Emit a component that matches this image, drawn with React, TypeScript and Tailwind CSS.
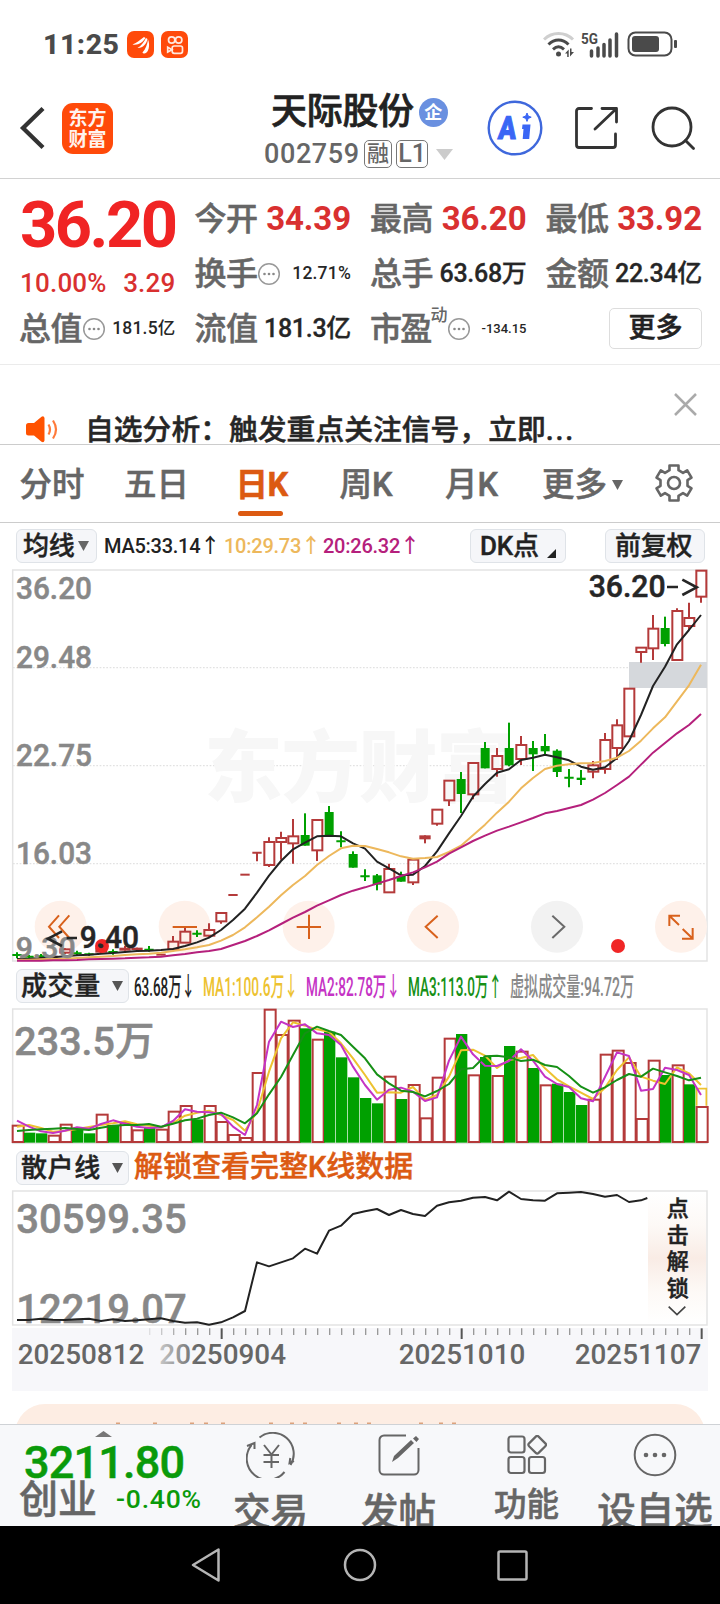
import React from 'react';

// [kind, top, bottom, high, low] - kind: r = rising (hollow), g = falling (filled), f = rising and filled,
// x = green doji, d = red dash. Y values are in chart units.
type Candle = [string, number, number, number, number];

const candles: Candle[] = [
  ['x', 1185, 1185, 1177, 1195],
  ['x', 1190, 1190, 1185, 1196],
  ['x', 1189, 1189, 1182, 1196],
  ['d', 1190, 1190, 1190, 1190],
  ['r', 1168, 1178, 1165, 1182],
  ['x', 1180, 1180, 1172, 1188],
  ['x', 1183, 1183, 1178, 1188],
  ['r', 1165, 1175, 1150, 1180],
  ['x', 1176, 1176, 1168, 1184],
  ['f', 1163, 1172, 1158, 1172],
  ['f', 1163, 1170, 1163, 1172],
  ['x', 1169, 1169, 1158, 1175],
  ['d', 1184, 1184, 1184, 1184],
  ['r', 1145, 1168, 1128, 1168],
  ['r', 1115, 1148, 1103, 1148],
  ['x', 1121, 1121, 1111, 1131],
  ['r', 1110, 1127, 1090, 1131],
  ['r', 1059, 1084, 1059, 1091],
  ['d', 1005, 1005, 1005, 1005],
  ['d', 944, 944, 944, 944],
  ['d', 878, 878, 878, 904],
  ['r', 846, 915, 832, 921],
  ['r', 834, 846, 815, 899],
  ['r', 829, 850, 777, 911],
  ['g', 825, 857, 760, 857],
  ['r', 780, 871, 780, 903],
  ['g', 756, 831, 738, 831],
  ['x', 844, 844, 814, 862],
  ['g', 882, 923, 874, 923],
  ['x', 949, 949, 928, 963],
  ['g', 946, 974, 942, 991],
  ['r', 927, 997, 911, 997],
  ['g', 948, 965, 935, 965],
  ['r', 899, 967, 899, 975],
  ['f', 826, 838, 826, 850],
  ['r', 749, 791, 749, 797],
  ['r', 662, 721, 662, 738],
  ['g', 657, 702, 636, 759],
  ['r', 609, 703, 609, 718],
  ['g', 564, 625, 546, 625],
  ['r', 588, 627, 564, 650],
  ['g', 564, 616, 488, 619],
  ['r', 555, 597, 528, 615],
  ['g', 564, 583, 543, 633],
  ['g', 558, 574, 522, 586],
  ['g', 572, 636, 568, 651],
  ['x', 653, 653, 627, 682],
  ['g', 653, 660, 630, 675],
  ['r', 616, 635, 603, 655],
  ['r', 540, 627, 519, 641],
  ['r', 496, 564, 478, 600],
  ['r', 386, 529, 386, 529],
  ['r', 263, 276, 263, 308],
  ['r', 206, 265, 165, 300],
  ['g', 204, 252, 170, 259],
  ['r', 153, 300, 145, 300],
  ['r', 174, 198, 128, 210],
  ['r', 32, 110, 32, 128],
];

const ma5 = [1197, 1196, 1194, 1192, 1189, 1186, 1184, 1181, 1179, 1176, 1173, 1172, 1170, 1167, 1158, 1147, 1133, 1110, 1080, 1046, 998, 947, 903, 868, 848, 829, 827, 829, 850, 866, 905, 925, 946, 944, 918, 874, 820, 768, 710, 672, 638, 628, 600, 593, 584, 592, 601, 620, 629, 622, 594, 543, 465, 378, 320, 253, 210, 165];
const ma10 = [1200, 1199, 1198, 1197, 1196, 1194, 1192, 1190, 1188, 1185, 1183, 1181, 1178, 1173, 1168, 1162, 1155, 1142, 1125, 1102, 1072, 1040, 1006, 975, 948, 915, 888, 865, 857, 858, 867, 877, 889, 896, 894, 891, 876, 857, 826, 794, 758, 725, 685, 654, 627, 617, 613, 610, 609, 603, 593, 573, 542, 505, 472, 424, 376, 314];
const ma20 = [1202, 1202, 1202, 1201, 1201, 1200, 1198, 1197, 1196, 1195, 1193, 1192, 1190, 1186, 1182, 1177, 1173, 1167, 1155, 1143, 1128, 1111, 1092, 1073, 1056, 1037, 1021, 1005, 992, 982, 971, 960, 948, 937, 922, 905, 881, 862, 843, 827, 812, 800, 787, 774, 760, 753, 744, 735, 719, 699, 675, 650, 614, 578, 549, 520, 495, 462];

const volumes: [string, number][] = [
  ['r', 480], ['g', 503], ['g', 505], ['r', 510], ['r', 477], ['g', 493], ['g', 505], ['r', 447], ['g', 480], ['r', 472],
  ['r', 494], ['g', 487], ['r', 492], ['r', 438], ['r', 421], ['g', 463], ['r', 421], ['r', 469], ['r', 508], ['r', 517],
  ['r', 322], ['r', 132], ['r', 208], ['r', 165], ['g', 190], ['r', 222], ['g', 200], ['g', 277], ['g', 337], ['g', 399],
  ['g', 415], ['r', 333], ['g', 402], ['r', 358], ['r', 458], ['r', 336], ['r', 219], ['g', 207], ['r', 329], ['g', 276],
  ['r', 331], ['g', 243], ['r', 258], ['g', 309], ['r', 359], ['g', 356], ['g', 381], ['g', 420], ['r', 402], ['r', 267],
  ['r', 255], ['r', 292], ['r', 460], ['r', 285], ['g', 330], ['r', 299], ['g', 358], ['r', 424],
];

const volYellow = [485, 480, 489, 500, 497, 492, 486, 480, 475, 469, 478, 482, 487, 474, 452, 443, 437, 450, 465, 497, 440, 320, 220, 172, 182, 193, 200, 235, 280, 330, 383, 382, 383, 366, 404, 390, 335, 256, 254, 272, 309, 285, 279, 270, 310, 343, 364, 383, 402, 368, 315, 277, 335, 347, 357, 307, 325, 360];
const volPurple = [467, 485, 499, 504, 497, 487, 491, 477, 466, 476, 485, 489, 487, 468, 433, 440, 442, 447, 485, 510, 420, 230, 170, 186, 178, 205, 210, 240, 305, 360, 404, 374, 368, 380, 408, 397, 287, 215, 268, 302, 303, 288, 253, 287, 335, 357, 366, 400, 409, 336, 262, 273, 377, 372, 308, 315, 330, 390];
const volGreen = [498, 495, 493, 491, 489, 492, 495, 488, 482, 480, 480, 477, 485, 476, 466, 461, 450, 443, 457, 475, 445, 388, 336, 270, 205, 185, 198, 210, 245, 280, 328, 355, 377, 381, 394, 378, 357, 313, 309, 274, 272, 277, 288, 284, 300, 306, 333, 365, 383, 367, 345, 327, 335, 311, 322, 333, 346, 338];

const holders = [420, 420, 416, 419, 420, 418, 416, 423, 418, 423, 421, 418, 415, 423, 428, 427, 434, 427, 412, 393, 247, 259, 247, 235, 206, 221, 152, 137, 102, 94, 87, 105, 90, 102, 108, 77, 67, 62, 53, 51, 61, 35, 57, 61, 62, 40, 38, 36, 42, 50, 45, 66, 61];

const cx = (i: number) => 51 + i * 36;
const line = (ys: number[]) => ys.map((y, i) => `${cx(i)},${y}`).join(' ');

const RED = '#b43a3a';
const GREEN = '#00a000';

const CandleMark = ({ candle, index }: { candle: Candle; index: number }) => {
  const [kind, top, bottom, high, low] = candle;
  const x = cx(index);
  if (kind === 'x') {
    return <path d={`M${x - 14} ${top}H${x + 14}M${x} ${high}V${low}`} stroke={GREEN} strokeWidth={6} />;
  }
  if (kind === 'd') {
    return <path d={`M${x - 14} ${top}H${x + 14}M${x} ${high}V${low}`} stroke={RED} strokeWidth={6} />;
  }
  if (kind === 'r') {
    return (
      <g stroke={RED} fill="none" strokeWidth={6}>
        <path d={`M${x} ${high}V${top}M${x} ${bottom}V${low}`} />
        <rect x={x - 14} y={top} width={30} height={bottom - top} />
      </g>
    );
  }
  const color = kind === 'g' ? GREEN : RED;
  return (
    <g fill={color}>
      <rect x={x - 3} y={high} width={6} height={low - high} />
      <rect x={x - (kind === 'g' ? 13 : 17)} y={top} width={kind === 'g' ? 27 : 34} height={bottom - top} />
    </g>
  );
};

interface LabelProps {
  x: number;
  y: number;
  w: number;
  size: number;
  color?: string;
  children: string;
}

const Label = ({ x, y, w, size, color = '#888888', children }: LabelProps) => (
  <text x={x} y={y} textLength={w} lengthAdjust="spacingAndGlyphs" fontSize={size} fontWeight={500} fill={color} stroke={color} strokeWidth={1.5}>
    {children}
  </text>
);

const controls = [
  { x: 182, bg: '#fef1ea', stroke: '#d8611c', d: 'M177 1066l-30 34 30 34M208 1066l-30 34 30 34' },
  { x: 554, bg: '#fef1ea', stroke: '#d8611c', d: 'M518 1101h73' },
  { x: 926, bg: '#fef1ea', stroke: '#d8611c', d: 'M890 1101h73M927 1064v73' },
  { x: 1299, bg: '#fef1ea', stroke: '#d8611c', d: 'M1313 1067l-36 33 36 34' },
  { x: 1671, bg: '#f2f2f2', stroke: '#6a6a6a', d: 'M1657 1067l36 33-36 34' },
  { x: 2043, bg: '#fef1ea', stroke: '#d8611c', d: 'M2008 1098v-31h32M2009 1068l28 27M2078 1104v32h-32M2077 1135l-29-28' },
];

const PriceChart = () => (
  <svg className="block w-full h-[394px]" viewBox="0 24 2160 1182">
    <rect x={38} y={30} width={2083} height={1173} fill="none" stroke="#e3e3e3" strokeWidth={4.5} />
    <path d="M39 323H2120M39 617H2120M39 911H2120" stroke="#e2e2e2" strokeWidth={4} strokeDasharray="5 5" />
    <text x={612} y={708} textLength={932} fontSize={236} fontWeight={900} fill="#f7f7f7">东方财富</text>
    <rect x={1887} y={306} width={234} height={78} fill="#d5d8dc" />
    {controls.map((c) => <circle key={c.x} cx={c.x} cy={1100} r={78} fill={c.bg} />)}
    {candles.map((c, i) => <CandleMark key={i} candle={c} index={i} />)}
    <g fill="none" strokeWidth={6} strokeLinejoin="round">
      <polyline points={line(ma5)} stroke="#222222" />
      <polyline points={line(ma10)} stroke="#edb85c" />
      <polyline points={line(ma20)} stroke="#b5207c" />
    </g>
    <Label x={48} y={116} w={228} size={93}>36.20</Label>
    <Label x={48} y={323} w={228} size={93}>29.48</Label>
    <Label x={48} y={617} w={228} size={93}>22.75</Label>
    <Label x={48} y={911} w={228} size={93}>16.03</Label>
    <Label x={47} y={1193} w={180} size={91}>9.30</Label>
    {controls.map((c) => <path key={c.x} d={c.d} fill="none" stroke={c.stroke} strokeWidth={6} />)}
    <circle cx={306} cy={1158} r={21} fill="#f02626" />
    <circle cx={300} cy={1156} r={6} fill="#333" />
    <circle cx={1854} cy={1158} r={21} fill="#f02626" />
    <path d="M186 1114l-42 22 42 22M200 1134h31" fill="none" stroke="#262626" strokeWidth={8} />
    <Label x={239} y={1164} w={178} size={92} color="#262626">9.40</Label>
    <Label x={1766} y={110} w={231} size={92} color="#262626">36.20</Label>
    <path d="M2001 81h33M2047 59l43 23-43 23" fill="none" stroke="#262626" strokeWidth={8} />
  </svg>
);

const VolumeChart = () => (
  <svg className="block w-full h-[138px]" viewBox="0 126 2160 414">
    <rect x={38} y={132} width={2083} height={403} fill="none" stroke="#e3e3e3" strokeWidth={4.5} />
    {volumes.map(([kind, top], i) =>
      kind === 'g' ? (
        <rect key={i} x={cx(i) - 15} y={top} width={34} height={533 - top} fill={GREEN} />
      ) : (
        <rect key={i} x={cx(i) - 13} y={top + 2} width={33} height={529 - top} fill="#fff" stroke={RED} strokeWidth={6} />
      )
    )}
    <path d="M2090 422V371h29V422" fill="none" stroke="#edc230" strokeWidth={5} />
    <g fill="none" strokeWidth={6} strokeLinejoin="round">
      <polyline points={line(volYellow)} stroke="#edc230" />
      <polyline points={line(volPurple)} stroke="#c534c5" />
      <polyline points={line(volGreen)} stroke="#169016" />
    </g>
    <Label x={43} y={270} w={420} size={119}>233.5万</Label>
  </svg>
);

const dates = [
  { text: '20250812', x: 53, fill: '#666' },
  { text: '20250904', x: 478, fill: 'url(#fade)' },
  { text: '20251010', x: 1196, fill: '#666' },
  { text: '20251107', x: 1724, fill: '#666' },
];

const HolderChart = () => (
  <svg className="block w-full h-[204px]" viewBox="0 24 2160 612">
    <defs>
      <linearGradient id="fade" x1="0" x2="1" y1="0" y2="0">
        <stop offset="0" stopColor="#c8c8c8" />
        <stop offset="0.3" stopColor="#666" />
      </linearGradient>
      <linearGradient id="unlock" x1="0" x2="0" y1="0" y2="1">
        <stop offset="0" stopColor="#ffffff" />
        <stop offset="0.25" stopColor="#fdf9f6" />
        <stop offset="0.5" stopColor="#f9ece5" />
        <stop offset="0.75" stopColor="#fdf9f6" />
        <stop offset="1" stopColor="#ffffff" />
      </linearGradient>
    </defs>
    <rect x={38} y={33} width={2083} height={402} fill="none" stroke="#e3e3e3" strokeWidth={4.5} />
    <rect x={1944} y={38} width={174} height={394} fill="url(#unlock)" />
    <Label x={49} y={158} w={511} size={122}>30599.35</Label>
    <Label x={49} y={428} w={511} size={122}>12219.07</Label>
    <polyline points={`${line(holders)} 1942,54`} fill="none" stroke="#222" strokeWidth={6} strokeLinejoin="round" />
    {['点', '击', '解', '锁'].map((ch, i) => (
      <text key={ch} x={2033} y={107 + i * 80.5} fontSize={66} fontWeight={500} fill="#222" stroke="#222" strokeWidth={1.5} textAnchor="middle">{ch}</text>
    ))}
    <path d="M2006 380l25 24 25-24" fill="none" stroke="#444" strokeWidth={5} />
    <rect x={36} y={444} width={2088} height={189} fill="#f7f7fa" />
    {Array.from({ length: 47 }, (_, k) => k + 11).map((i) => {
      const major = i === 17 || i === 37 || i === 57;
      return (
        <path
          key={i}
          d={`M${cx(i) + 2} 445V${major ? 477 : 465}`}
          stroke={major ? '#555' : '#999'}
          strokeWidth={major ? 6 : 4}
          opacity={i < 14 ? (i - 10) * 0.25 : 1}
        />
      );
    })}
    {dates.map((d) => (
      <text key={d.text} x={d.x} y={552} textLength={380} lengthAdjust="spacingAndGlyphs" fontSize={83} fontWeight={500} fill={d.fill}>
        {d.text}
      </text>
    ))}
  </svg>
);

const Dots = () => (
  <svg className="block size-[24px] shrink-0" viewBox="0 0 24 24">
    <circle cx="12" cy="12" r="10.3" fill="none" stroke="#999" strokeWidth="1.5" />
    <g fill="#888">
      <circle cx="7.5" cy="12" r="1.3" />
      <circle cx="12" cy="12" r="1.3" />
      <circle cx="16.5" cy="12" r="1.3" />
    </g>
  </svg>
);

interface StatProps {
  label: string;
  value: string;
  valueClass: string;
  dots?: boolean;
  sup?: string;
}

const Stat = ({ label, value, valueClass, dots, sup }: StatProps) => (
  <div className="flex items-center justify-between h-[55px] whitespace-nowrap">
    <div className="flex items-center h-full text-[#666] text-[32px] font-medium -ml-px">
      <span className={`[-webkit-text-stroke:0.5px] ${sup ? 'tracking-[-1.800px]' : 'tracking-[-0.600px]'}`}>{label}</span>
      {sup && <span className="text-[17px] self-start leading-[24px] mt-[2px]">{sup}</span>}
      {dots && <Dots />}
    </div>
    <span className={valueClass}>{value}</span>
  </div>
);

const StatusBar = () => (
  <div className="flex items-center h-[88px] pl-[43px] pr-[42px] text-[#4a4a4a]">
    <span className="mt-[2px] text-[28.500px] font-extrabold tracking-[0.500px] w-[84px]">11:25</span>
    <svg className="size-[27px]" viewBox="0 0 27 27">
      <rect width="27" height="27" rx="7" fill="#ff4a0a" />
      <path d="M5.500 13.500C9 12.500 13 9 17 6L18.500 7C16 11 11.500 14.500 5.500 13.500z" fill="#fff" />
      <path d="M10.500 17C14 15 17 11 19 7L20.500 8C19.500 13 15.500 17.500 10.500 17z" fill="#fff" />
      <path d="M15.500 21.500C18.500 18 20.500 13 21 8.500C23.500 14 21.500 22.500 17.500 22.500C16.500 22.500 15.500 22.300 15.500 21.500z" fill="#fff" />
    </svg>
    <svg className="size-[27px] ml-[7px]" viewBox="0 0 27 27">
      <rect width="27" height="27" rx="7" fill="#ff4a0a" />
      <g fill="none" stroke="#ffe9df" strokeWidth="1.7">
        <circle cx="10.7" cy="9" r="3.2" />
        <circle cx="17.7" cy="9" r="3.2" />
        <rect x="11.2" y="15" width="10.3" height="7.3" rx="2" />
        <path d="M11 18.7l-4.3-2.4v4.8z" />
      </g>
    </svg>
    <svg className="ml-auto w-[32px] h-[26px]" viewBox="0 0 32 26" fill="none" strokeWidth="3">
      <path d="M1 8.500C9 .5 22 .5 30 8.500" stroke="#cfcfcf" />
      <path d="M5.500 13.500c6-6 14-6 20 0M10 18.300c4-3.500 7-3.500 11 0" stroke="#4a4a4a" />
      <circle cx="15.500" cy="23" r="2.500" fill="#4a4a4a" />
      <path d="M22 22.500l3.700-4v7.500h-1.500v-3.500zM27 17.500v8l4-4.500h-2.500v-3.500z" fill="#4a4a4a" />
    </svg>
    <svg className="ml-[5px] w-[39px] h-[28px]" viewBox="-1 -2 39 28">
      <text x="0" y="12" textLength="17" lengthAdjust="spacingAndGlyphs" fontSize="15.500" fontWeight="700" fill="#4a4a4a">5G</text>
      <path d="M10.500 24v-5M17 24v-8M23 24v-11.500M29 24V8M35.500 24V2" stroke="#4a4a4a" strokeWidth="3.500" strokeLinecap="round" />
    </svg>
    <svg className="ml-[8px] w-[51px] h-[26px]" viewBox="0 0 51 26">
      <rect x="1.500" y="1.500" width="43" height="23" rx="7" fill="none" stroke="#4a4a4a" strokeWidth="2" />
      <rect x="5" y="5" width="27" height="16" rx="3" fill="#4a4a4a" />
      <rect x="47" y="9" width="3" height="8" rx="1" fill="#4a4a4a" />
    </svg>
  </div>
);

const Header = () => (
  <div className="flex items-start h-[91px] border-b border-[#d2d2d2] text-[#222]">
    <svg className="mt-[18px] ml-[19px] w-[28px] h-[44px]" viewBox="0 0 28 44">
      <path d="M24 2.500L4 22l20 19.500" fill="none" stroke="#333" strokeWidth="4.300" />
    </svg>
    <div className="mt-[15px] ml-[15px] size-[51px] rounded-[11px] bg-[#ff4a0a] text-[#fff3ee] text-[19px] leading-[21px] font-bold flex flex-col items-center justify-center">
      <span>东方</span>
      <span>财富</span>
    </div>
    <div className="ml-[151px] w-[196px] pt-[2px]">
      <div className="flex items-center h-[44px] pl-[7px]">
        <span className="text-[36px] font-medium leading-[44px] tracking-[-0.300px] whitespace-nowrap [-webkit-text-stroke:0.700px]">天际股份</span>
        <span className="ml-[5px] size-[29px] shrink-0 rounded-full bg-[#6a90e0] text-white text-[18px] font-bold flex items-center justify-center">企</span>
      </div>
      <div className="flex items-center h-[40px] text-[#666] text-[27px] font-medium">
        <span className="tracking-[0.600px] w-[100px]">002759</span>
        <span className="w-[28px] h-[28px] shrink-0 rounded-[5px] border-[1.500px] border-[#777] text-[22px] leading-[22px] flex items-center justify-center">融</span>
        <span className="ml-[4px] w-[32px] h-[28px] shrink-0 rounded-[5px] border-[1.500px] border-[#777] text-[25px] flex items-center justify-center">L1</span>
        <svg className="ml-[8px] w-[17px] h-[11px] shrink-0" viewBox="0 0 17 11"><path d="M0 0h17L8.500 11z" fill="#ccc" /></svg>
      </div>
    </div>
    <svg className="mt-[12px] ml-[27px] size-[56px]" viewBox="0 0 56 56">
      <circle cx="28" cy="28" r="26.300" fill="none" stroke="#3f68dc" strokeWidth="2.400" />
      <text x="11" y="39" textLength="18" lengthAdjust="spacingAndGlyphs" fontSize="32" fontWeight="900" fill="#3a66f5" stroke="#3a66f5" transform="skewX(-5) translate(3 0)">A</text>
      <path d="M35.500 24.500h8l-1.300 14.500h-6.500l.8-10h-1.500z" fill="#3a66f5" />
      <path d="M40 13l1.200 3 3 1.200-3 1.200-1.200 3-1.200-3-3-1.200 3-1.200z" fill="#3a66f5" stroke="#3a66f5" />
    </svg>
    <svg className="mt-[18px] ml-[31px] w-[44px] h-[44px]" viewBox="0 0 44 44" fill="none" stroke="#333" strokeWidth="2.800" strokeLinecap="round" strokeLinejoin="round">
      <path d="M17.500 2.500H5a2.500 2.500 0 0 0-2.500 2.500v34A2.500 2.500 0 0 0 5 41.500h34a2.500 2.500 0 0 0 2.500-2.500V28M28 2.500h14.500V16M42 3L21 23" />
    </svg>
    <svg className="mt-[18px] ml-[33px] w-[46px] h-[46px]" viewBox="0 0 46 46" fill="none" stroke="#333" strokeWidth="2.800" strokeLinecap="round">
      <circle cx="21" cy="21" r="19" />
      <path d="M34.500 34.500l8 8" />
    </svg>
  </div>
);

const big = 'mt-px text-[33px] font-bold text-[#d93030] tracking-[-0.100px]';
const mid = 'text-[25px] font-medium text-[#262626] tracking-[-0.300px] [-webkit-text-stroke:0.300px]';
const small = 'text-[17.500px] font-medium text-[#262626] tracking-[0.200px]';

const Quote = () => (
  <div className="grid grid-cols-4 gap-x-[20px] pl-[20px] pr-[18px] pt-[12px] h-[186px] border-b border-[#ebebeb]">
    <div>
      <div className="h-[70px] text-[#f02424] text-[65px] leading-[69px] font-bold tracking-[-2.500px] whitespace-nowrap">36.20</div>
      <div className="flex justify-between h-[40px] pt-[4px] items-center text-[#d93030] text-[26px] font-medium tracking-[0.200px]">
        <span>10.00%</span>
        <span>3.29</span>
      </div>
      <Stat label="总值" value="181.5亿" valueClass={small} dots />
    </div>
    <div>
      <Stat label="今开" value="34.39" valueClass={big} />
      <Stat label="换手" value="12.71%" valueClass={small} dots />
      <Stat label="流值" value="181.3亿" valueClass={mid} />
    </div>
    <div>
      <Stat label="最高" value="36.20" valueClass={big} />
      <Stat label="总手" value="63.68万" valueClass={mid} />
      <Stat label="市盈" value="-134.15" valueClass="text-[13px] font-medium text-[#262626]" dots sup="动" />
    </div>
    <div>
      <Stat label="最低" value="33.92" valueClass={big} />
      <Stat label="金额" value="22.34亿" valueClass={mid} />
      <div className="ml-auto mt-[7px] w-[93px] h-[41px] rounded-[5px] border border-[#ddd] text-[27px] font-medium text-[#222] [-webkit-text-stroke:0.500px] flex items-center justify-center">更多</div>
    </div>
  </div>
);

const Notice = () => (
  <div className="flex items-start h-[79px] overflow-hidden border-b border-[#ccc]">
    <svg className="mt-[50px] ml-[25px] w-[34px] h-[27px]" viewBox="0 0 34 27">
      <path d="M3.500 7h5.500l7.500-6.300q2.500-1.200 3 1.300v22.500q-.5 2.500-3 1.300L9 19.500H3.500Q1 19.500 1 17V9.500Q1 7 3.500 7z" fill="#ff5200" />
      <path d="M23.500 8.500q3 5 0 10M28 4.500q6 9 0 18" fill="none" stroke="#ff7a3a" strokeWidth="2.200" />
    </svg>
    <span className="mt-[43px] ml-[26px] text-[28.800px] leading-[42px] font-medium text-[#262626] whitespace-nowrap [-webkit-text-stroke:0.500px]">
      自选分析：触发重点关注信号，立即<span className="tracking-[1.800px]">...</span>
    </span>
    <svg className="mt-[27px] ml-auto mr-[23px] size-[23px]" viewBox="0 0 23 23">
      <path d="M1 1l21 21M22 1L1 22" stroke="#aaa" strokeWidth="2.500" />
    </svg>
  </div>
);

const tabs = [
  { name: '分时', className: 'w-[104px]' },
  { name: '五日', className: 'w-[105px]' },
  { name: '日K', className: 'w-[105px]', active: true },
  { name: '周K', className: 'w-[104px]' },
  { name: '月K', className: 'w-[107px]' },
];

const Tabs = () => (
  <div className="flex h-[78px] border-b border-[#ccc] text-[32.500px] font-medium text-[#666] [-webkit-text-stroke:0.500px]">
    {tabs.map((t) => (
      <div key={t.name} className={`flex flex-col items-center shrink-0 ${t.className}`}>
        <span className={`h-[66px] leading-[81px] ${t.active ? 'text-[#dc5a12] font-bold tracking-[-0.500px]' : ''}`}>{t.name}</span>
        {t.active && <span className="w-[45px] h-[5px] rounded-full bg-[#dc5a12] -ml-[2px] shrink-0" />}
      </div>
    ))}
    <div className="flex items-center ml-[17px] pt-[3px] shrink-0">
      <span>更多</span>
      <svg className="ml-[5px] w-[11px] h-[10px]" viewBox="0 0 11 10"><path d="M0 0h11L5.500 10z" fill="#666" /></svg>
    </div>
    <svg className="ml-[31px] mt-[18px] size-[40px] shrink-0" viewBox="0 0 40 40" fill="none" stroke="#666" strokeWidth="2.600" strokeLinejoin="round">
      <path d="M15.500 2.500h9v4.700l4.500 2.700 4.200-2.600 4.300 7.400-4 2.500v5.600l4 2.500-4.300 7.400-4.200-2.600-4.500 2.700v4.700h-9v-4.700L11 30.100l-4.200 2.600-4.300-7.400 4-2.500v-5.600l-4-2.500 4.300-7.400L11 9.900l4.500-2.700z" />
      <circle cx="20" cy="20" r="6" />
    </svg>
  </div>
);

const chip = 'flex items-center shrink-0 h-[34px] rounded-[6px] border border-[#dfe3e8] bg-[#f5f6f9] text-[26px] leading-none font-medium text-[#222] whitespace-nowrap [-webkit-text-stroke:0.400px]';

const AverageRow = () => (
  <div className="flex items-center h-[45px] pt-px pl-[16px] text-[20px] font-medium tracking-[-0.250px]">
    <div className={`${chip} w-[81px] pl-[6px]`}>
      均线
      <svg className="ml-[3px] w-[11px] h-[10px]" viewBox="0 0 11 10"><path d="M0 0h11L5.500 10z" fill="#666" /></svg>
    </div>
    <span className="ml-[7px] w-[120px] text-[#222] whitespace-nowrap">MA5:33.14↑</span>
    <span className="w-[99px] text-[#edb85c] whitespace-nowrap">10:29.73↑</span>
    <span className="w-[147px] text-[#b5207c] whitespace-nowrap">20:26.32↑</span>
    <div className={`${chip} w-[96px] pl-[9px]`}>
      DK点
      <svg className="ml-[8px] mt-[14px] size-[9px]" viewBox="0 0 9 9"><path d="M9 0v9H0z" fill="#222" /></svg>
    </div>
    <div className={`${chip} w-[100px] ml-[39px] pl-[9px]`}>前复权</div>
  </div>
);

const Condensed = ({ w, color, children }: { w: number; color: string; children: string }) => (
  <svg className="block h-[40px] mr-[8px] shrink-0" style={{ width: w }} viewBox={`0 0 ${w} 40`}>
    <text x="0" y="30" textLength={w} lengthAdjust="spacingAndGlyphs" fontSize="26" fontWeight="500" fill={color}>{children}</text>
  </svg>
);

const SelectChip = ({ children }: { children: string }) => (
  <div className={`${chip} w-[113px] ml-[16px] pl-[4px] mr-[5px]`}>
    <span className="tracking-[0.600px]">{children}</span>
    <svg className="ml-[11px] w-[11px] h-[10px]" viewBox="0 0 11 10"><path d="M0 0h11L5.500 10z" fill="#555" /></svg>
  </div>
);

// slivers of the banner's headline that peek above the bottom bar
const slivers = [116, 153, 190, 204, 221, 269, 290, 303, 337, 354, 367, 419, 439, 452];

const BottomBar = () => (
  <div className="flex h-[102px] overflow-hidden border-t border-[#cfd2d6] bg-[#f7f8fa] text-[#666] font-medium [-webkit-text-stroke:0.500px]">
    <div className="w-[212px] shrink-0">
      <svg className="block mt-[6px] ml-[95px] w-[17px] h-[6px]" viewBox="0 0 17 6"><path d="M0 6L8.500 0 17 6z" fill="#777" /></svg>
      <div className="ml-[24px] h-[46px] text-[#0a9a0a] text-[45px] leading-[52px] tracking-[-0.800px]">3211.80</div>
      <div className="flex items-center ml-[19px] -mt-[5px] h-[44px]">
        <span className="text-[39px] leading-[44px]">创业</span>
        <span className="ml-[19px] -mt-[3px] text-[26.500px] text-[#0a9a0a] tracking-[0.800px] whitespace-nowrap [-webkit-text-stroke:0]">-0.40%</span>
      </div>
    </div>
    <div className="w-[117px] shrink-0 flex flex-col items-center">
      <svg className="mt-[7px] w-[50px] h-[46px] shrink-0" viewBox="0 0 50 46" fill="none" stroke="#666" strokeWidth="2">
        <path d="M13.500 5.500A21 21 0 0 1 44.500 33M48 29l-4.500 2 .8-5M38.500 40A21 21 0 0 1 5.500 13M1 14l7.500-3v6" />
        <path d="M18 13l7.500 9.500L33 13M17.500 23H33M17.500 30H33M25.500 22v14" />
      </svg>
      <span className="text-[37.500px] leading-[50px] mt-[9px]">交易</span>
    </div>
    <div className="w-[139px] shrink-0 flex flex-col items-center">
      <svg className="mt-[9px] w-[42px] h-[42px] shrink-0" viewBox="0 0 42 42" fill="none" stroke="#666" strokeWidth="2">
        <path d="M28 1.500H6A4.500 4.500 0 0 0 1.500 6v30A4.500 4.500 0 0 0 6 40.500h30A4.500 4.500 0 0 0 40.500 36V14" />
        <path d="M14 28l2-6L33 6l3 3-16 15zM35 4.500l3-2.500 3 3-2.500 3z" fill="#666" stroke="none" />
      </svg>
      <span className="text-[37.500px] leading-[50px] mt-[11px]">发帖</span>
    </div>
    <div className="w-[117px] shrink-0 flex flex-col items-center">
      <svg className="mt-[10px] w-[40px] h-[40px] shrink-0" viewBox="0 0 40 40" fill="none" stroke="#666" strokeWidth="2.200">
        <rect x="1.500" y="1.500" width="16" height="16" rx="2.500" />
        <rect x="1.500" y="22" width="16" height="16" rx="2.500" />
        <rect x="22" y="22" width="16" height="16" rx="2.500" />
        <rect x="23.500" y="3" width="13.500" height="13.500" rx="2" transform="rotate(45 30.200 9.700)" />
      </svg>
      <span className="text-[32.500px] leading-[50px] mt-[5px]">功能</span>
    </div>
    <div className="w-[140px] shrink-0 flex flex-col items-center">
      <svg className="mt-[8px] w-[44px] h-[44px] shrink-0" viewBox="0 0 44 44">
        <circle cx="22" cy="22" r="20.300" fill="none" stroke="#666" strokeWidth="2" />
        <g fill="#666">
          <circle cx="13" cy="22" r="2.300" />
          <circle cx="22" cy="22" r="2.300" />
          <circle cx="31" cy="22" r="2.300" />
        </g>
      </svg>
      <span className="text-[38.500px] leading-[50px] mt-[10px] whitespace-nowrap">设自选</span>
    </div>
  </div>
);

const SystemNav = () => (
  <div className="flex items-center h-[78px] bg-black pl-[191px]">
    <svg className="w-[30px] h-[36px]" viewBox="0 0 30 36"><path d="M27.500 2.500v31L2 18z" fill="none" stroke="#b5b5b5" strokeWidth="2.500" strokeLinejoin="round" /></svg>
    <svg className="ml-[122px] size-[34px]" viewBox="0 0 34 34"><circle cx="17" cy="17" r="15" fill="none" stroke="#b5b5b5" strokeWidth="2.500" /></svg>
    <svg className="ml-[120px] size-[31px]" viewBox="0 0 31 31"><rect x="1.500" y="1.500" width="28" height="28" rx="1.500" fill="none" stroke="#b5b5b5" strokeWidth="2.500" /></svg>
  </div>
);

const App = () => (
  <div className="w-[720px] h-[1604px] overflow-hidden bg-white font-['Roboto','Noto_Sans_CJK_SC',sans-serif]">
    <StatusBar />
    <Header />
    <Quote />
    <div className="h-px" />
    <Notice />
    <Tabs />
    <AverageRow />
    <PriceChart />
    <div className="flex items-center h-[45px] pt-[2px]">
      <SelectChip>成交量</SelectChip>
      <Condensed w={61} color="#222">63.68万↓</Condensed>
      <Condensed w={95} color="#edc230">MA1:100.6万↓</Condensed>
      <Condensed w={94} color="#c534c5">MA2:82.78万↓</Condensed>
      <Condensed w={94} color="#169016">MA3:113.0万↑</Condensed>
      <Condensed w={124} color="#888">虚拟成交量:94.72万</Condensed>
    </div>
    <VolumeChart />
    <div className="flex items-center h-[43px] pt-[2px] text-[29px] font-medium text-[#dc5a12] [-webkit-text-stroke:0.500px]">
      <SelectChip>散户线</SelectChip>
      <span>解锁查看完整K线数据</span>
    </div>
    <HolderChart />
    <div className="h-[32px] pt-[12px] px-[15px] overflow-hidden">
      <div className="h-[60px] rounded-[34px] bg-[#fdede3]">
        <svg className="block w-full h-[20px]" viewBox="15 0 690 20">
          {slivers.map((x) => <rect key={x} x={x} y={18.500} width={4} height={1.500} fill="#dca27c" />)}
        </svg>
      </div>
    </div>
    <BottomBar />
    <SystemNav />
  </div>
);

export default App;
